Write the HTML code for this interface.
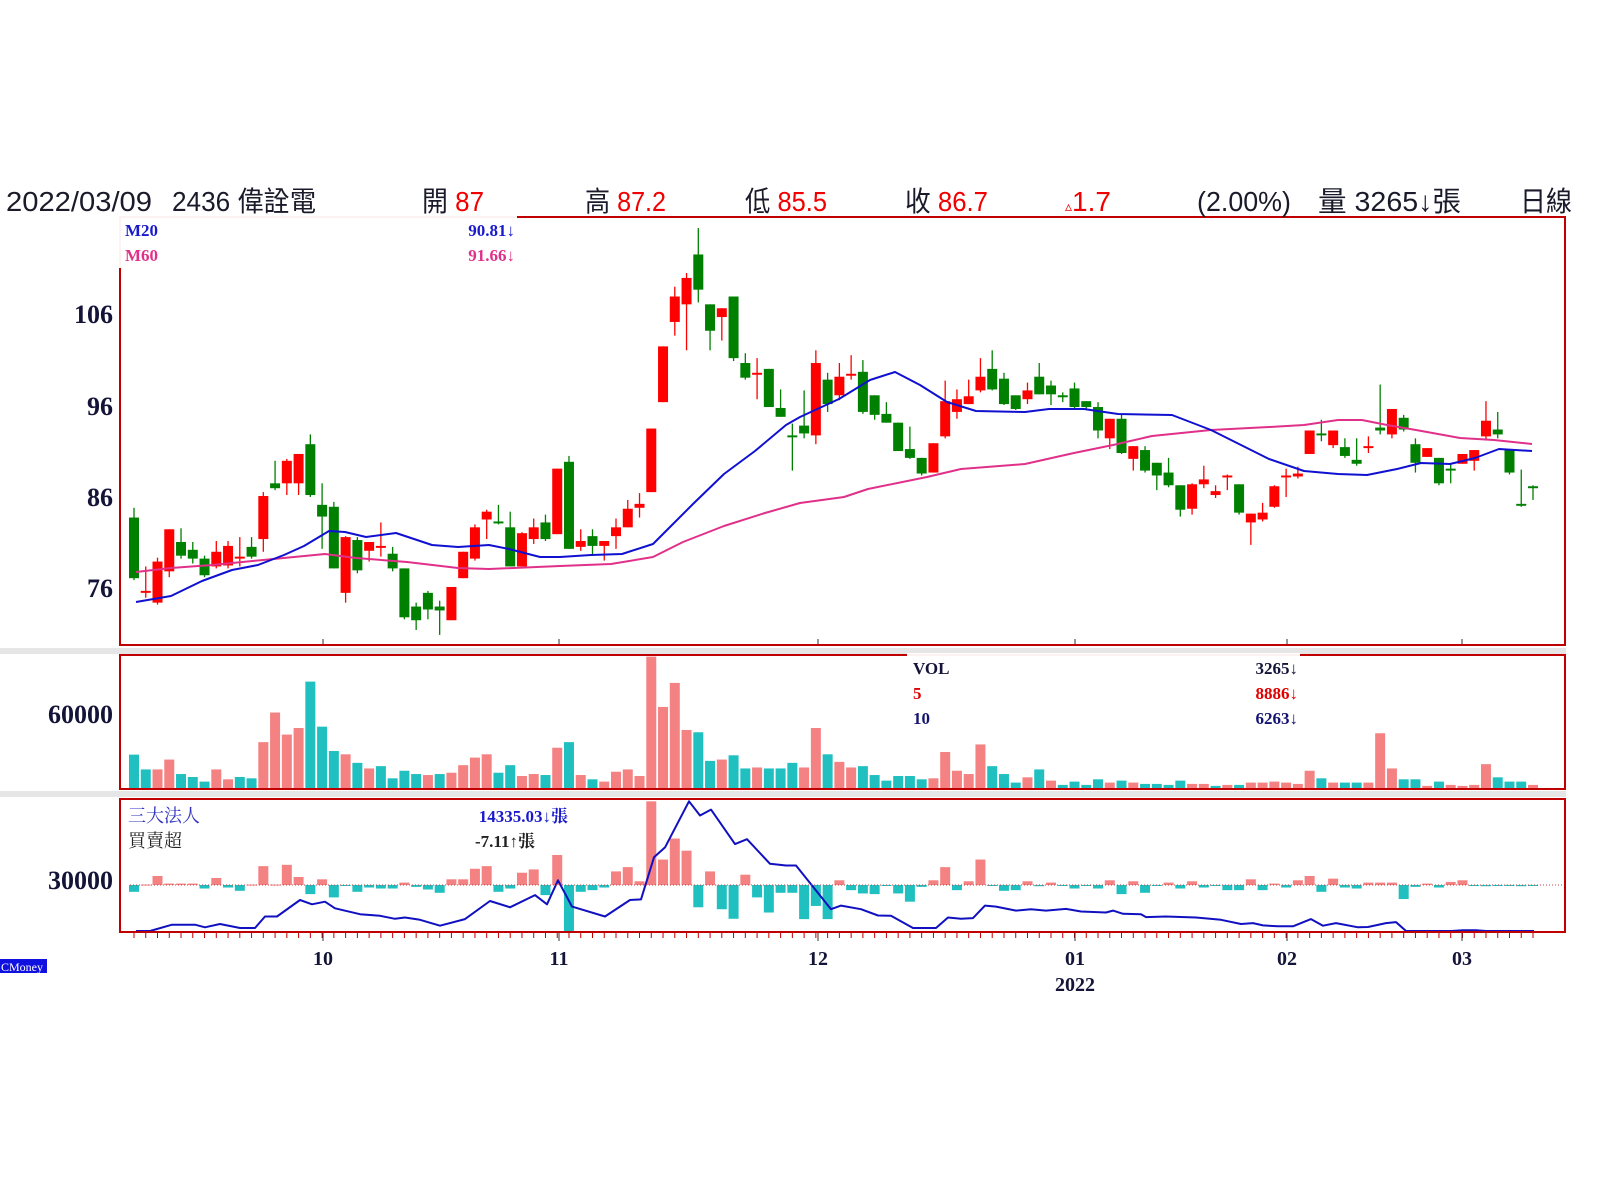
<!DOCTYPE html>
<html><head><meta charset="utf-8">
<style>
html,body{margin:0;padding:0;background:#fff;width:1600px;height:1200px;overflow:hidden}
svg{position:absolute;left:0;top:0}
.h{font-family:"Liberation Sans","Noto Sans CJK TC",sans-serif;font-size:28px;fill:#1a1a2a}
.r{fill:#f00000}
.ax{font-family:"Liberation Serif",serif;font-weight:bold;font-size:26px;fill:#141438}
.mo{font-family:"Liberation Serif",serif;font-weight:bold;font-size:20px;fill:#141438}
.lg{font-family:"Liberation Serif","Noto Serif CJK SC",serif;font-weight:bold;font-size:17px}
.lg2{font-family:"Liberation Serif","Noto Serif CJK SC",serif;font-size:18px}
</style></head><body>
<svg id="s" width="1600" height="1200" xmlns="http://www.w3.org/2000/svg">
<rect x="0" y="648" width="1566" height="6" fill="#e6e6e6"/>
<rect x="0" y="791" width="1566" height="6" fill="#e6e6e6"/>
<g id="g"></g>
<line x1="130" y1="885" x2="1565" y2="885" stroke="#c04040" stroke-width="1" stroke-dasharray="1,2"/>
<rect x="120" y="217" width="1445" height="428" fill="none" stroke="#c00000" stroke-width="2"/>
<rect x="120" y="655" width="1445" height="134" fill="none" stroke="#c00000" stroke-width="2"/>
<rect x="120" y="799" width="1445" height="133" fill="none" stroke="#c00000" stroke-width="2"/>
<rect x="118" y="214" width="399" height="54" fill="#fff" fill-opacity="0.95"/>
<text class="lg" x="125" y="236" fill="#1a1acc">M20</text>
<text class="lg" x="515" y="236" fill="#1a1acc" text-anchor="end">90.81↓</text>
<text class="lg" x="125" y="261" fill="#e0308a">M60</text>
<text class="lg" x="515" y="261" fill="#e0308a" text-anchor="end">91.66↓</text>
<rect x="907" y="653" width="393" height="76" fill="#fff" fill-opacity="0.95"/>
<text class="lg" x="913" y="674" fill="#141438">VOL</text>
<text class="lg" x="1298" y="674" fill="#141438" text-anchor="end">3265↓</text>
<text class="lg" x="913" y="699" fill="#e00000">5</text>
<text class="lg" x="1298" y="699" fill="#e00000" text-anchor="end">8886↓</text>
<text class="lg" x="913" y="724" fill="#141470">10</text>
<text class="lg" x="1298" y="724" fill="#141470" text-anchor="end">6263↓</text>
<rect x="122" y="801" width="448" height="52" fill="#fff" fill-opacity="0.95"/>
<text class="lg2" x="128" y="822" fill="#3030c0">三大法人</text>
<text class="lg" x="568" y="822" fill="#1a1acc" text-anchor="end">14335.03↓張</text>
<text class="lg2" x="128" y="847" fill="#222">買賣超</text>
<text class="lg" x="535" y="847" fill="#222" text-anchor="end">-7.11↑張</text>
<text class="h" x="6" y="211" textLength="146" lengthAdjust="spacingAndGlyphs">2022/03/09</text>
<text class="h" x="172" y="211" textLength="144" lengthAdjust="spacingAndGlyphs">2436 偉詮電</text>
<text class="h" x="422" y="211" textLength="62" lengthAdjust="spacingAndGlyphs">開 <tspan class="r">87</tspan></text>
<text class="h" x="585" y="211" textLength="81" lengthAdjust="spacingAndGlyphs">高 <tspan class="r">87.2</tspan></text>
<text class="h" x="745" y="211" textLength="82" lengthAdjust="spacingAndGlyphs">低 <tspan class="r">85.5</tspan></text>
<text class="h" x="905" y="211" textLength="83" lengthAdjust="spacingAndGlyphs">收 <tspan class="r">86.7</tspan></text>
<text class="h" x="1065" y="211"><tspan class="r" font-size="14">▵</tspan><tspan class="r">1.7</tspan></text>
<text class="h" x="1197" y="211" textLength="94" lengthAdjust="spacingAndGlyphs">(2.00%)</text>
<text class="h" x="1318" y="211" textLength="143" lengthAdjust="spacingAndGlyphs">量 3265↓張</text>
<text class="h" x="1520" y="211" textLength="52" lengthAdjust="spacingAndGlyphs">日線</text>
<text class="ax" x="113" y="323" text-anchor="end">106</text>
<text class="ax" x="113" y="415" text-anchor="end">96</text>
<text class="ax" x="113" y="506" text-anchor="end">86</text>
<text class="ax" x="113" y="597" text-anchor="end">76</text>
<text class="ax" x="113" y="723" text-anchor="end">60000</text>
<text class="ax" x="113" y="889" text-anchor="end">30000</text>
<text class="mo" x="323" y="965" text-anchor="middle">10</text>
<text class="mo" x="559" y="965" text-anchor="middle">11</text>
<text class="mo" x="818" y="965" text-anchor="middle">12</text>
<text class="mo" x="1075" y="965" text-anchor="middle">01</text>
<text class="mo" x="1287" y="965" text-anchor="middle">02</text>
<text class="mo" x="1462" y="965" text-anchor="middle">03</text>
<text class="mo" x="1075" y="991" text-anchor="middle">2022</text>
<rect x="0" y="959" width="47" height="14" fill="#1010e0"/>
<text x="1" y="971" font-family="Liberation Serif,serif" font-size="12" fill="#fff">CMoney</text>
</svg>
<script>
var NS="http://www.w3.org/2000/svg",g=document.getElementById('g');
function el(t,a){var e=document.createElementNS(NS,t);for(var k in a)e.setAttribute(k,a[k]);g.appendChild(e);return e;}
var C=[
"G 528 590 518 592","R 603 605 578 610","R 573 615 569 617","R 540 583 540 589","G 553 567 539 570","G 561 570 553 575","G 570 587 567 589","R 563 578 552 580","R 557 577 552 580","R 568 570 548 578",
"G 558 568 548 570","R 506 550 502 563","G 493 498 470 500","R 470 493 468 505","R 463 493 463 505","G 453 505 443 507","G 515 527 493 560","G 517 580 512 580","R 548 605 547 615","G 551 582 548 585",
"R 553 562 553 573","R 557 559 533 568","G 565 580 558 583","G 580 630 580 632","G 619 633 615 643","G 605 622 603 632","G 619 623 613 648","R 599 633 599 633","R 563 590 563 590","R 538 570 535 572",
"R 522 530 520 550","G 532 534 515 535","G 538 578 522 578","R 544 578 543 578","R 538 550 529 555","G 533 550 525 552","R 478 545 478 545","G 471 560 465 560","R 552 558 540 562","G 547 557 540 567",
"R 552 557 552 572","R 538 547 529 560","R 519 538 510 538","R 514 518 503 528","R 437 502 437 502","R 353 410 353 410","R 302 328 292 342","R 283 310 278 357","G 259 295 232 308","G 310 337 310 357",
"R 314 323 314 347","G 302 365 302 368","G 370 385 360 387","R 380 382 365 407","G 376 415 376 415","G 416 425 397 425","G 444 446 432 480","G 434 442 398 447","R 370 444 357 453","G 387 412 380 420",
"R 384 403 370 408","R 381 383 362 387","G 379 420 367 422","G 403 423 403 428","G 422 431 410 431","G 431 460 431 460","G 458 467 435 468","G 467 483 467 485","R 452 482 452 482","R 409 445 388 447",
"R 407 420 397 427","R 404 412 387 412","R 384 398 365 400","G 376 397 357 398","G 386 412 380 413","G 403 417 403 418","R 398 407 390 412","G 384 402 370 402","G 393 402 388 413","G 403 405 400 410",
"G 396 415 390 417","G 409 415 409 417","G 415 439 410 447","R 427 447 427 458","G 427 462 423 463","R 455 468 455 480","G 459 480 455 482","G 472 485 472 500","G 482 495 467 497","G 495 520 495 527",
"R 494 519 493 525","R 489 494 475 498","R 501 505 495 508","R 485 487 484 500","G 494 523 494 525","R 524 533 524 556","R 523 530 513 532","R 496 517 495 518","R 485 487 478 507","R 483 486 476 488",
"R 439 463 439 463","G 442 444 428 450","R 439 454 439 457","G 456 465 447 467","G 469 473 447 475","R 455 457 445 462","G 436 439 392 443","R 417 443 417 447","G 426 438 423 440","G 453 472 447 482",
"R 457 466 457 466","G 467 493 467 495","G 478 480 473 493","R 463 473 463 473","R 459 470 459 480","R 429 445 409 448","G 438 443 420 447","G 458 482 458 484","G 514 516 479 517","G 496 498 495 510"];
var N=C.length,x0=134,dx=(1533-134)/(N-1);
function X(i){return x0+i*dx;}
function Y(v){return 177.2+(v-180)*0.978;}
var V="t388 t433 s433 s403 t447 t456 t470 s433 s463 t456 t460 s350 s260 s327 s307 t166 t303 t377 s387 t413 s430 t423 t460 t437 t447 s450 t447 s443 s420 s397 s387 t443 t420 s453 s447 t450 s367 t350 s450 t463 s470 s440 s433 s453 s90 s243 s170 s313 t320 t407 s403 t390 t430 s427 t430 t430 t413 s427 s307 t387 s410 s427 t423 t450 t467 t453 t453 t463 s460 s380 s437 s447 s357 t423 t447 t473 s457 t433 s467 t480 t470 t480 t463 s473 t467 s473 t477 t477 t480 t467 s477 s477 t483 s480 t480 s473 s473 s470 s473 s477 s437 t460 s473 t473 t473 s473 s323 s430 t463 t463 s483 t470 s480 s483 s480 s417 t457 t470 t470 s480".split(" ");
for(var i=0;i<V.length&&i<N;i++){var c=V[i][0]=='t'?'#20c0c0':'#f48282';var vt=627+(+V[i].slice(1))/3.04;vt=Math.max(vt,656);el('rect',{x:X(i)-5,y:vt,width:10,height:789-vt,fill:c});}
var B="t805 s783 s757 s780 s780 s780 t795 s763 t792 t802 s783 s727 s783 s723 s760 t812 s767 t822 t787 t805 t792 t795 t795 s777 t790 t798 t808 s767 s767 s735 s727 t805 t795 s747 s737 t815 s693 t930 t805 t800 t792 s743 s730 s773 s530 s707 s643 s680 t852 s743 t858 t887 s753 t822 t868 t808 t808 t888 t848 t888 s770 t800 t810 t812 t787 t810 t835 t790 s770 s730 t800 s773 s707 t787 t802 t800 s773 t788 s777 t787 t795 t787 t795 s770 t812 s773 t808 t787 s777 t795 s773 t792 t787 t800 t800 s767 t800 s780 t792 s770 s757 t805 s765 t792 t795 s777 s777 s777 t827 t790 s780 t792 s775 s770 t787 t788 t787 t787 t788 t787".split(" ");
for(var i=0;i<B.length&&i<N;i++){var c=B[i][0]=='t'?'#20c0c0':'#f48282';var y=627+(+B[i].slice(1))/3.04;y=Math.max(800,Math.min(931,y));var y0=885;el('rect',{x:X(i)-5,y:Math.min(y,y0),width:10,height:Math.max(1,Math.abs(y-y0)),fill:c});}
for(var i=0;i<N;i++){var p=C[i].split(" "),col=p[0]=='R'?'#ff0000':'#008000',x=X(i);
var bt=Y(+p[1]),bb=Y(+p[2]),wt=Y(+p[3]),wb=Y(+p[4]);
el('line',{x1:x,y1:wt,x2:x,y2:wb,stroke:col,'stroke-width':1.3});
el('rect',{x:x-5,y:bt,width:10,height:Math.max(1.5,bb-bt),fill:col});}
function pl(pts,col,w){el('polyline',{points:pts,fill:'none',stroke:col,'stroke-width':w,'stroke-linejoin':'round'});}
pl("136,572 171,568 212,565 263,560 325,554 356,558 407,562 458,568 489,569 560,566 611,564 653,557 683,542 724,526 765,513 800,503 844,497 868,489 927,477 961,469 1025,464 1074,453 1113,445 1152,436 1211,430 1269,427 1304,425 1338,420 1362,420 1387,425 1416,430 1460,438 1494,440 1532,444","#e0308a",2);
pl("136,602 171,596 202,581 232,570 258,565 284,555 304,546 329,531 345,532 366,537 396,533 432,545 458,547 489,545 509,549 540,557 560,557 591,555 622,554 653,544 668,529 694,503 724,474 755,451 786,425 800,417 839,399 870,380 895,372 920,385 947,402 976,411 1025,412 1049,409 1084,409 1118,414 1172,415 1211,430 1269,459 1304,471 1338,474 1367,475 1397,469 1421,463 1450,464 1475,458 1499,449 1532,451","#1010d0",2);
var raw="136,930 150,930 172,905 195,905 205,913 220,903 240,915 255,915 265,880 277,880 300,830 312,843 325,835 335,855 360,873 380,878 395,887 405,883 420,890 440,908 465,888 490,833 510,852 535,815 547,843 558,770 572,850 605,880 630,830 641,828 654,700 665,670 689,530 700,573 711,555 735,660 747,645 770,720 786,725 796,725 831,858 841,847 861,858 878,877 891,878 913,915 936,915 948,883 961,887 973,885 985,847 996,850 1016,862 1031,858 1046,862 1066,857 1081,865 1106,868 1113,862 1123,872 1141,873 1146,882 1166,880 1196,883 1221,890 1241,903 1253,900 1263,907 1278,910 1293,910 1311,888 1323,908 1336,900 1358,913 1368,912 1386,900 1396,897 1406,930 1451,930 1463,922 1476,922 1486,925 1501,925 1508,932 1534,932".split(" ").map(function(s){var a=s.split(",");return a[0]+","+Math.min(931,(627+(+a[1])/3.04)).toFixed(1);}).join(" ");
pl(raw,"#1010c0",2);
for(var i=0;i<N;i++){el('line',{x1:X(i),y1:933,x2:X(i),y2:938,stroke:'#c00000','stroke-width':1});}
[323,559,818,1075,1287,1462].forEach(function(x){el('line',{x1:x,y1:639,x2:x,y2:645,stroke:'#333','stroke-width':1});el('line',{x1:x,y1:933,x2:x,y2:941,stroke:'#333','stroke-width':1});});
</script>
</body></html>
